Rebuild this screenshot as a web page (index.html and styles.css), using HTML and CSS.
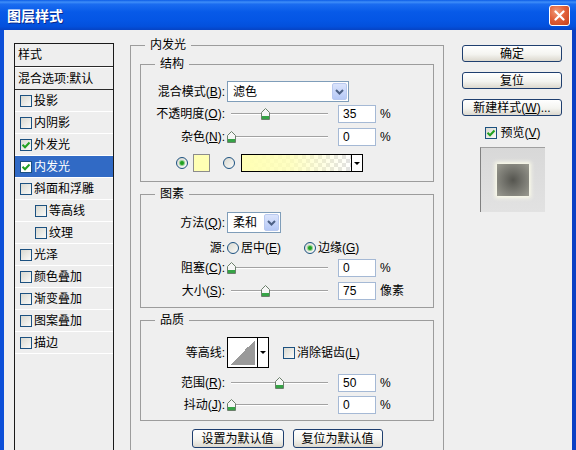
FILE: index.html
```html
<!DOCTYPE html>
<html lang="zh-CN">
<head>
<meta charset="utf-8">
<title>图层样式</title>
<link rel="stylesheet" href="styles.css">
</head>
<body>
<div class="window">
  <header class="titlebar">
    <span class="title">图层样式</span>
    <span class="close"><svg width="11" height="11" viewBox="0 0 11 11"><path d="M1.5 1.5 L9.5 9.5 M9.5 1.5 L1.5 9.5" stroke="#fff" stroke-width="2.2" stroke-linecap="round"/></svg></span>
  </header>
  <div class="frame">
    <div class="stylelist">
      <div class="hdr">样式</div>
      <div class="hdr">混合选项:默认</div>
      <div class="item"><span class="cb"></span>投影</div>
      <div class="item"><span class="cb"></span>内阴影</div>
      <div class="item"><span class="cb"><svg width="10" height="10" viewBox="0 0 10 10"><path d="M1.5 4.8 L4 7.3 L8.5 2.5" fill="none" stroke="#21a121" stroke-width="2"/></svg></span>外发光</div>
      <div class="item sel"><span class="cb"><svg width="10" height="10" viewBox="0 0 10 10"><path d="M1.5 4.8 L4 7.3 L8.5 2.5" fill="none" stroke="#21a121" stroke-width="2"/></svg></span>内发光</div>
      <div class="item"><span class="cb"></span>斜面和浮雕</div>
      <div class="item sub"><span class="cb"></span>等高线</div>
      <div class="item sub"><span class="cb"></span>纹理</div>
      <div class="item"><span class="cb"></span>光泽</div>
      <div class="item"><span class="cb"></span>颜色叠加</div>
      <div class="item"><span class="cb"></span>渐变叠加</div>
      <div class="item"><span class="cb"></span>图案叠加</div>
      <div class="item"><span class="cb"></span>描边</div>
    </div>

    <fieldset class="outer">
      <legend class="outer-legend">内发光</legend>

      <fieldset class="group group-struct">
        <legend>结构</legend>
        <div class="row h21 mt10">
          <span class="lbl">混合模式(<u>B</u>):</span>
          <div class="select select-blend"><span>滤色</span><span class="dd"><svg width="9" height="6" viewBox="0 0 9 6"><path d="M1 1 L4.5 4.5 L8 1" fill="none" stroke="#4d6185" stroke-width="2"/></svg></span></div>
        </div>
        <div class="row h18 mt3">
          <span class="lbl">不透明度(<u>O</u>):</span>
          <div class="slider"><svg class="thumb" style="left:30px" width="9" height="12" viewBox="0 0 9 12"><path d="M0.5 11.5 V4.5 L4.5 0.5 L8.5 4.5 V11.5 Z" fill="#f6f6f6" stroke="#6b7f6b"/><rect x="1" y="8" width="7" height="3" fill="#36a446"/></svg></div>
          <span class="num">35</span><span class="unit">%</span>
        </div>
        <div class="row h18 mt5">
          <span class="lbl">杂色(<u>N</u>):</span>
          <div class="slider"><svg class="thumb" style="left:-4px" width="9" height="12" viewBox="0 0 9 12"><path d="M0.5 11.5 V4.5 L4.5 0.5 L8.5 4.5 V11.5 Z" fill="#f6f6f6" stroke="#6b7f6b"/><rect x="1" y="8" width="7" height="3" fill="#36a446"/></svg></div>
          <span class="num">0</span><span class="unit">%</span>
        </div>
        <div class="row h18 mt8 colorrow">
          <span class="radio on"></span>
          <span class="swatch"></span>
          <span class="radio radio-grad"></span>
          <div class="gradbar"><span class="gradfill"></span><span class="gradarrow"></span></div>
        </div>
      </fieldset>

      <fieldset class="group group-elem">
        <legend>图素</legend>
        <div class="row h21 mt11">
          <span class="lbl">方法(<u>Q</u>):</span>
          <div class="select select-method"><span>柔和</span><span class="dd"><svg width="9" height="6" viewBox="0 0 9 6"><path d="M1 1 L4.5 4.5 L8 1" fill="none" stroke="#4d6185" stroke-width="2"/></svg></span></div>
        </div>
        <div class="row h20 mt5">
          <span class="lbl">源:</span>
          <label class="opt opt-first"><span class="radio"></span>居中(<u>E</u>)</label>
          <label class="opt"><span class="radio on"></span>边缘(<u>G</u>)</label>
        </div>
        <div class="row h19">
          <span class="lbl">阻塞(<u>C</u>):</span>
          <div class="slider"><svg class="thumb" style="left:-4px" width="9" height="12" viewBox="0 0 9 12"><path d="M0.5 11.5 V4.5 L4.5 0.5 L8.5 4.5 V11.5 Z" fill="#f6f6f6" stroke="#6b7f6b"/><rect x="1" y="8" width="7" height="3" fill="#36a446"/></svg></div>
          <span class="num">0</span><span class="unit">%</span>
        </div>
        <div class="row h19 mt4">
          <span class="lbl">大小(<u>S</u>):</span>
          <div class="slider"><svg class="thumb" style="left:30px" width="9" height="12" viewBox="0 0 9 12"><path d="M0.5 11.5 V4.5 L4.5 0.5 L8.5 4.5 V11.5 Z" fill="#f6f6f6" stroke="#6b7f6b"/><rect x="1" y="8" width="7" height="3" fill="#36a446"/></svg></div>
          <span class="num">75</span><span class="unit">像素</span>
        </div>
      </fieldset>

      <fieldset class="group group-quality">
        <legend>品质</legend>
        <div class="row h31 mt10">
          <span class="lbl">等高线:</span>
          <div class="contour"><span class="curve"><span class="curve-fill"></span></span><span class="gradarrow"></span></div>
          <label class="opt opt-aa"><span class="cb"></span>消除锯齿(<u>L</u>)</label>
        </div>
        <div class="row h20 mt5">
          <span class="lbl">范围(<u>R</u>):</span>
          <div class="slider"><svg class="thumb" style="left:44px" width="9" height="12" viewBox="0 0 9 12"><path d="M0.5 11.5 V4.5 L4.5 0.5 L8.5 4.5 V11.5 Z" fill="#f6f6f6" stroke="#6b7f6b"/><rect x="1" y="8" width="7" height="3" fill="#36a446"/></svg></div>
          <span class="num">50</span><span class="unit">%</span>
        </div>
        <div class="row h20 mt2">
          <span class="lbl">抖动(<u>J</u>):</span>
          <div class="slider"><svg class="thumb" style="left:-4px" width="9" height="12" viewBox="0 0 9 12"><path d="M0.5 11.5 V4.5 L4.5 0.5 L8.5 4.5 V11.5 Z" fill="#f6f6f6" stroke="#6b7f6b"/><rect x="1" y="8" width="7" height="3" fill="#36a446"/></svg></div>
          <span class="num">0</span><span class="unit">%</span>
        </div>
      </fieldset>

      <div class="btnrow">
        <span class="btn btn-default">设置为默认值</span>
        <span class="btn btn-reset">复位为默认值</span>
      </div>
    </fieldset>

    <div class="side">
      <span class="btn">确定</span>
      <span class="btn">复位</span>
      <span class="btn">新建样式(<u>W</u>)...</span>
      <label class="opt preview-check"><span class="cb"><svg width="10" height="10" viewBox="0 0 10 10"><path d="M1.5 4.8 L4 7.3 L8.5 2.5" fill="none" stroke="#21a121" stroke-width="2"/></svg></span>预览(<u>V</u>)</label>
      <div class="preview"><span class="preview-square"></span></div>
    </div>
  </div>
</div>
</body>
</html>
```

FILE: styles.css
```css
* { box-sizing: border-box; }
html, body { margin: 0; padding: 0; }
body {
  width: 576px;
  height: 450px;
  overflow: hidden;
  background: #efefef;
  color: #000;
  font: 12px/14px "Liberation Sans", "Noto Sans CJK SC", sans-serif;
}
u { text-decoration: underline; text-underline-offset: 1px; }

.window { width: 576px; height: 450px; display: flex; flex-direction: column; overflow: hidden; }

.titlebar {
  height: 30px;
  flex: none;
  display: flex;
  align-items: center;
  justify-content: space-between;
  padding: 0 6px 0 7px;
  background: linear-gradient(#0b5ce6 0%, #3f8ef8 7%, #1a6cf0 14%, #075ae8 40%, #0455e4 70%, #0350dc 88%, #0643c4 100%);
}
.title {
  color: #fff;
  font: bold 14px/16px "Noto Sans CJK SC", sans-serif;
  text-shadow: 1px 1px 0 #0a2a8c;
}
.close {
  width: 21px;
  height: 21px;
  border: 1px solid #fff;
  border-radius: 3px;
  background: radial-gradient(circle at 35% 30%, #f09a78 0%, #e2613a 45%, #c6401a 100%);
  display: flex;
  align-items: center;
  justify-content: center;
}

.frame {
  flex: 1;
  min-height: 0;
  display: flex;
  align-items: flex-start;
  background: #efefef;
  border-left: 4px solid #0c4fd8;
  border-right: 4px solid #0a3fc4;
  padding-left: 10px;
}

/* style list */
.stylelist {
  width: 100px;
  height: 407px;
  margin-top: 13px;
  flex: none;
  border: 1px solid #1a1a1a;
  border-bottom: none;
  background: #eeeeee;
}
.hdr {
  height: 23px;
  display: flex;
  align-items: center;
  padding-left: 3px;
  border-bottom: 1px solid #2a2a2a;
  border-top: 1px solid #fff;
}
.hdr:first-child { border-top: none; }
.item {
  height: 22px;
  display: flex;
  align-items: center;
  padding-left: 5px;
  border-bottom: 1px solid #fff;
}
.item.sub { padding-left: 20px; }
.item.sel { background: #316ac5; color: #fff; }
.cb {
  width: 12px;
  height: 12px;
  flex: none;
  margin-right: 2px;
  border: 1px solid #1c5180;
  background: linear-gradient(135deg, #d8d8d0, #fafaf8);
  display: inline-flex;
  align-items: center;
  justify-content: center;
}
.item.sel .cb { background: #fff; }

/* main group */
.outer {
  width: 314px;
  height: 412px;
  min-width: 0;
  margin: 8px 0 0 16px;
  padding: 0 9px;
  border: 1px solid #9c9c9c;
  border-bottom: none;
  flex: none;
}
legend { padding: 0 5px; line-height: 14px; margin-left: 14px; }
.outer-legend { margin-left: 5px; }
.group {
  width: 100%;
  min-width: 0;
  margin: 5px 0 0;
  padding: 0;
  border: 1px solid #9c9c9c;
}
.group-struct { padding-bottom: 9px; }
.group-elem { padding-bottom: 7px; }
.group-quality { padding-bottom: 5px; }

.row { display: flex; align-items: center; }
.h18 { height: 18px; }
.h19 { height: 19px; }
.h20 { height: 20px; }
.h21 { height: 21px; }
.h31 { height: 31px; }
.mt2 { margin-top: 2px; }
.mt3 { margin-top: 3px; }
.mt4 { margin-top: 4px; }
.mt5 { margin-top: 5px; }
.mt8 { margin-top: 8px; }
.mt10 { margin-top: 10px; }
.mt11 { margin-top: 11px; }

.lbl { width: 84px; margin-right: 2px; text-align: right; flex: none; white-space: nowrap; }

.select {
  height: 21px;
  border: 1px solid #7f9db9;
  background: #fff;
  display: flex;
  align-items: center;
  justify-content: space-between;
  padding: 1px 1px 1px 5px;
}
.select-blend { width: 122px; }
.select-method { width: 54px; }
.dd {
  width: 15px;
  height: 17px;
  border-radius: 2px;
  border: 1px solid #b9c9ef;
  background: linear-gradient(#dbe4fc, #b6c9f6);
  display: flex;
  align-items: center;
  justify-content: center;
}

.slider {
  position: relative;
  width: 97px;
  height: 14px;
  margin-left: 4px;
  flex: none;
  background:
    linear-gradient(#a2a2a2, #a2a2a2) 0 6px / 100% 1px no-repeat,
    linear-gradient(#ffffff, #ffffff) 0 7px / 100% 1px no-repeat;
}
.thumb { position: absolute; top: 1px; }

.num {
  width: 38px;
  height: 18px;
  margin-left: 10px;
  flex: none;
  border: 1px solid #a5b9d5;
  background: #fff;
  padding-left: 4px;
  line-height: 16px;
}
.unit { margin-left: 4px; }

.colorrow { padding-left: 35px; }
.radio {
  width: 12px;
  height: 12px;
  flex: none;
  border-radius: 50%;
  border: 1px solid #1c5180;
  background: linear-gradient(135deg, #d8d8d0, #fbfbf9);
  display: inline-flex;
  align-items: center;
  justify-content: center;
}
.radio.on::after {
  content: "";
  width: 4px;
  height: 4px;
  border-radius: 50%;
  background: #21a121;
  box-shadow: 0 0 0 1px #8fd28f;
}
.swatch {
  width: 17px;
  height: 18px;
  margin-left: 5px;
  border: 1px solid #8c8c8c;
  background: #ffffb4;
}
.radio-grad { margin-left: 13px; }
.gradbar {
  width: 122px;
  height: 18px;
  margin-left: 6px;
  border: 1px solid #000;
  display: flex;
}
.gradfill {
  flex: 1;
  background:
    linear-gradient(to right, #ffffb4 0%, rgba(255, 255, 180, 0.8) 45%, rgba(255, 255, 180, 0) 100%),
    repeating-conic-gradient(#e2e2e2 0 25%, #ffffff 0 50%) 0 0 / 8px 8px;
}
.gradarrow {
  width: 11px;
  flex: none;
  border-left: 1px solid #000;
  background: #fff;
  display: flex;
  align-items: center;
  justify-content: center;
}
.gradarrow::after {
  content: "";
  border-left: 3px solid transparent;
  border-right: 3px solid transparent;
  border-top: 3px solid #000;
}

.opt { display: inline-flex; align-items: center; white-space: nowrap; }
.opt .radio { margin-right: 2px; }
.opt-first { width: 77px; }

.contour {
  width: 42px;
  height: 31px;
  border: 1px solid #000;
  background: #fff;
  display: flex;
}
.curve { flex: 1; padding: 2px; display: flex; }
.curve-fill { flex: 1; background: linear-gradient(to top left, #9a9a9a 50%, #ffffff 50%); }
.opt-aa { margin-left: 14px; }

.btn {
  height: 19px;
  border: 1px solid #1f3f6f;
  border-radius: 3px;
  background: linear-gradient(#ffffff 0%, #f4f4f0 55%, #dcd8ce 100%);
  display: flex;
  align-items: center;
  justify-content: center;
  white-space: nowrap;
}
.btnrow { display: flex; justify-content: center; gap: 9px; margin-top: 8px; }
.btn-default { width: 92px; }
.btn-reset { width: 90px; }

.side {
  width: 100px;
  margin: 15px 0 0 18px;
  flex: none;
  display: flex;
  flex-direction: column;
  gap: 10px;
}
.side .btn { height: 17px; }
.preview-check { align-self: center; margin-left: 2px; }
.preview-check .cb { margin-right: 3px; }
.preview {
  width: 65px;
  height: 65px;
  margin-top: -3px;
  align-self: center;
  border-left: 1px solid #808080;
  border-top: 1px solid #a0a0a0;
  background: linear-gradient(#d8d8d8, #e2e2e2);
  display: flex;
  align-items: center;
  justify-content: center;
}
.preview-square {
  width: 32px;
  height: 32px;
  background: radial-gradient(circle, #55554f 0%, #75756e 45%, #9b9b91 100%);
  box-shadow: 0 0 4px 2px #fbfbe9;
}
```
